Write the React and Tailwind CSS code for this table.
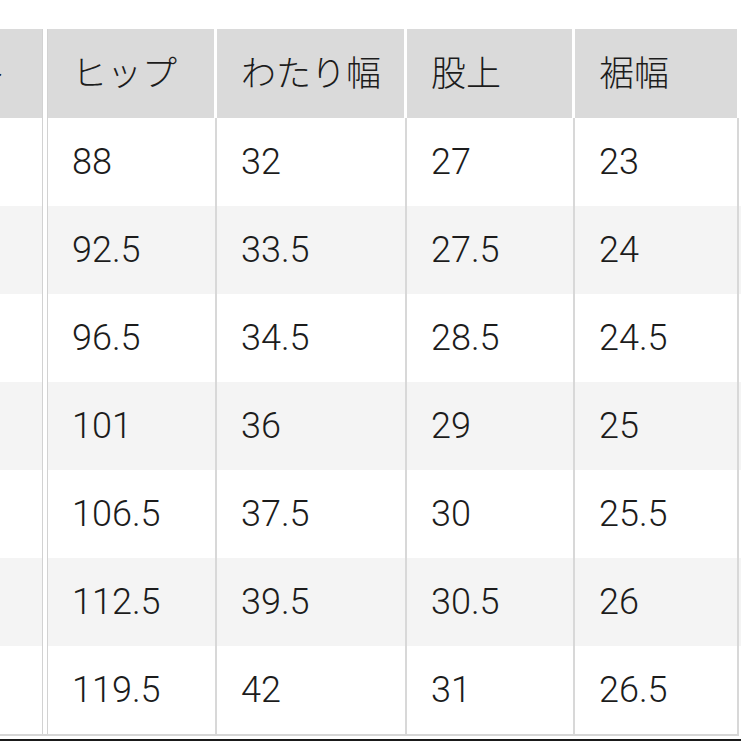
import React from 'react';

const headers = ['ヒップ', 'わたり幅', '股上', '裾幅'];

const rows = [
  ['88', '32', '27', '23'],
  ['92.5', '33.5', '27.5', '24'],
  ['96.5', '34.5', '28.5', '24.5'],
  ['101', '36', '29', '25'],
  ['106.5', '37.5', '30', '25.5'],
  ['112.5', '39.5', '30.5', '26'],
  ['119.5', '42', '31', '26.5'],
];

// widths of the 4 visible columns, each includes its right border
const widths = ['w-[169px]', 'w-[190px]', 'w-[168px]', 'w-[164px]'];

function Divider() {
  // double rule after the (scrolled off) first column
  return <div className="w-[6px] shrink-0 self-stretch border-x border-[#d2d2d2] bg-white" />;
}

export default function App() {
  return (
    <div
      className="w-[741px] h-[741px] bg-white overflow-hidden text-[#1c1c1c] font-light"
      style={{ fontFamily: 'Roboto, "Noto Sans CJK JP", sans-serif' }}
    >
      <div className="h-[29px]" />

      {/* header */}
      <div className="flex h-[89px]">
        <div className="w-[42px] shrink-0 bg-[#dadada] overflow-hidden flex items-center justify-end pr-[35px] pt-[3px] text-[35px]">
          <span className="whitespace-nowrap">ウエスト</span>
        </div>
        <Divider />
        {headers.map((h, i) => (
          <div
            key={h}
            className={`${widths[i]} shrink-0 flex items-center pl-[24px] pt-[4px] text-[35px] bg-[#dadada] ${
              i === 3 ? 'border-r-[2px] border-white' : 'border-r-[3px] border-white'
            }`}
          >
            {h}
          </div>
        ))}
      </div>

      {/* body */}
      {rows.map((r, ri) => (
        <div key={ri} className={`flex h-[88px] ${ri % 2 === 1 ? 'bg-[#f4f4f4]' : 'bg-white'}`}>
          <div className="w-[42px] shrink-0" />
          <Divider />
          {r.map((v, i) => (
            <div
              key={i}
              className={`${widths[i]} shrink-0 flex items-center pl-[24px] text-[36px] border-r-[2px] border-[#d8d8d8]`}
            >
              {v}
            </div>
          ))}
        </div>
      ))}

      <div className="flex h-[2px]">
        <div className="w-[739px] bg-[#d6d6d6]" />
      </div>
      <div className="h-[3px]" />
      <div className="h-[3px] bg-[#1a1a1a]" />
    </div>
  );
}
